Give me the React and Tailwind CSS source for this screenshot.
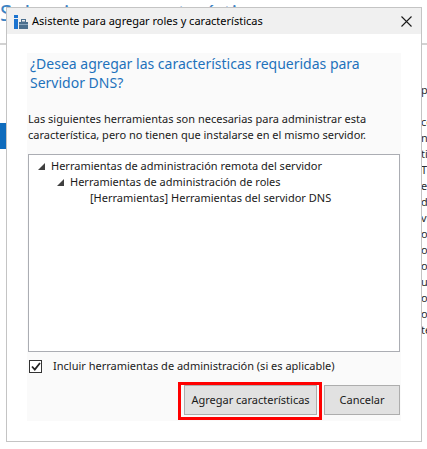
import React from 'react';

const font = "font-['Noto_Sans',sans-serif]";

const sideLines = ['pr', '', 'co', 'ne', 'tiv', 'TC', 'es', 'de', 'vi', 'or', 'ot', 'or', 'us', 'ot', 'or', 'te'];

const Triangle = () => (
    <svg width="7" height="7" viewBox="0 0 7 7" className="shrink-0">
        <path d="M7 0 L7 7 L0 7 Z" fill="#404040" />
    </svg>
);

const WizardIcon = () => (
    <svg width="16" height="16" viewBox="0 0 16 16">
        <rect x="2" y="1" width="4" height="3" fill="#1c74d0" />
        <rect x="2" y="5" width="4" height="10" fill="#1c74d0" />
        <rect x="7" y="8" width="9" height="7" fill="#4b6f8e" />
        <rect x="9.5" y="5.5" width="4" height="2.5" fill="none" stroke="#4b6f8e" strokeWidth="1" />
        <rect x="7" y="10" width="9" height="1" fill="#8aa6bd" />
    </svg>
);

const App = () => {
    return (
        <div className={`relative w-[427px] h-[449px] bg-white overflow-hidden ${font}`}>
            {/* background window behind the dialog */}
            <div className="absolute left-0 top-[-1px] text-[22px] leading-[26px] text-[#3d82c4] whitespace-nowrap">
                Seleccionar características
            </div>
            <div className="absolute left-0 top-[43px] w-full h-[2px] bg-[#d2d2d2]" />
            <div className="absolute left-0 top-[123px] w-[6px] h-[26px] bg-[#0f6cbd]" />
            <div className="absolute left-[421px] top-[82px] text-[11px] leading-[16px] text-[#2b2b2b]">
                {sideLines.map((l, i) => (
                    <div key={i} className="h-[16px]">{l}</div>
                ))}
            </div>

            {/* dialog window */}
            <div className="absolute left-[6px] top-[7px] w-[416px] h-[435px] bg-white border border-[#c4c4c4] flex flex-col">
                <div className="h-[26px] bg-[#f0f0f0] flex items-center shrink-0">
                    <div className="ml-[5px] mt-[1px]">
                        <WizardIcon />
                    </div>
                    <span className="ml-[4px] text-[11px] leading-[16px] text-black">
                        Asistente para agregar roles y características
                    </span>
                    <div className="ml-auto mr-[9px] w-[11px] h-[11px] flex items-center justify-center">
                        <svg width="11" height="11" viewBox="0 0 11 11">
                            <path d="M0.5 0.5 L10.5 10.5 M10.5 0.5 L0.5 10.5" stroke="#1a1a1a" strokeWidth="1.1" />
                        </svg>
                    </div>
                </div>

                <div className="flex-1 px-[20px] pt-[19px] pb-[20px]">
                    <div className="h-full bg-[#fafafa] px-[1px] flex flex-col">
                        <h1 className="mt-[1px] ml-[2px] text-[14px] leading-[19px] font-normal text-[#1e72bc]">
                            ¿Desea agregar las características requeridas para
                            <br />
                            Servidor DNS?
                        </h1>
                        <p className="mt-[19px] text-[11px] leading-[16px] text-[#1a1a1a]">
                            Las siguientes herramientas son necesarias para administrar esta
                            <br />
                            característica, pero no tienen que instalarse en el mismo servidor.
                        </p>

                        <div className="mt-[11px] h-[198px] w-[372px] bg-white border border-[#abadb3] pt-[3px] text-[11px] leading-[16px] text-[#1a1a1a]">
                            <div className="flex items-center h-[16px] pl-[9px]">
                                <Triangle />
                                <span className="ml-[6px]">Herramientas de administración remota del servidor</span>
                            </div>
                            <div className="flex items-center h-[16px] pl-[28px]">
                                <Triangle />
                                <span className="ml-[6px]">Herramientas de administración de roles</span>
                            </div>
                            <div className="flex items-center h-[16px] pl-[61px]">
                                <span>[Herramientas] Herramientas del servidor DNS</span>
                            </div>
                        </div>

                        <label className="mt-[6px] flex items-center h-[16px] text-[11px] leading-[16px] text-[#1a1a1a]">
                            <span className="ml-[1px] w-[13px] h-[13px] border border-[#333333] bg-white flex items-center justify-center">
                                <svg width="10" height="9" viewBox="0 0 10 9">
                                    <path d="M1 4.5 L3.8 7.5 L9 1" fill="none" stroke="#222222" strokeWidth="1.8" />
                                </svg>
                            </span>
                            <span className="ml-[11px]">Incluir herramientas de administración (si es aplicable)</span>
                        </label>

                        <div className="mt-[8px] flex justify-end items-start">
                            <div className="border-[3px] border-[#ff0000] pl-[3px] pr-[2px] pt-0 pb-[2px]">
                                <button className="w-[133px] h-[30px] bg-[#e1e1e1] border border-[#adadad] text-[11px] text-[#1a1a1a]">
                                    Agregar características
                                </button>
                            </div>
                            <button className="ml-[2px] mt-[3px] w-[76px] h-[30px] bg-[#e1e1e1] border border-[#adadad] text-[11px] text-[#1a1a1a]">
                                Cancelar
                            </button>
                        </div>
                    </div>
                </div>
            </div>
        </div>
    );
};

export default App;
